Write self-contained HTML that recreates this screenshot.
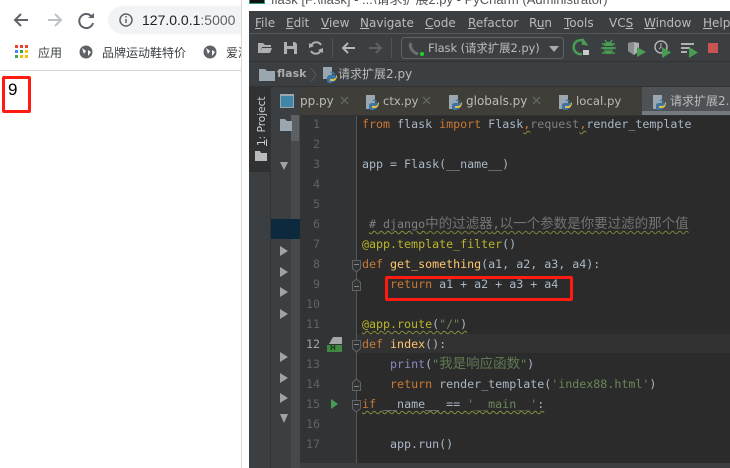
<!DOCTYPE html>
<html><head><meta charset="utf-8">
<style>
html,body{margin:0;padding:0;background:#fff}
#r{position:relative;width:730px;height:468px;overflow:hidden;background:#fff;font-family:"Liberation Sans","Noto Sans CJK SC",sans-serif}
.a{position:absolute;white-space:pre}
.b{position:absolute}
.ide{color:#bbbbbb;font-size:11.5px;font-family:"DejaVu Sans","Noto Sans CJK SC",sans-serif}
.c{position:absolute;left:362px;font:11.65px/20px "DejaVu Sans Mono","Noto Sans CJK SC",monospace;color:#a9b7c6;white-space:pre;height:20px}
.c i{font-style:normal;font-size:13.5px;line-height:14px;opacity:.85}
.n{position:absolute;left:300px;width:20px;text-align:right;font:11.65px/20px "DejaVu Sans Mono",monospace;color:#606366}
.k{color:#cc7832}.g{color:#6a8759}.y{color:#bbb529}.f{color:#ffc66d}.p{color:#808080}.b2{color:#8888c6}.w{color:#a9b7c6}
.u{text-decoration:underline wavy #8a8f3c 1px;text-underline-offset:2px}
.tri{position:absolute;left:280px;width:0;height:0;border-left:8px solid #a0a2a4;border-top:5px solid transparent;border-bottom:5px solid transparent}
.m u{text-underline-offset:1px}
</style></head><body><div id="r">

<!-- Browser -->
<svg class="b" style="left:0;top:0" width="242" height="70" viewBox="0 0 242 70" fill="none">
<path d="M28 20H16M21 14l-6 6 6 6" stroke="#5f6368" stroke-width="2"/>
<path d="M48 20h12M55 14l6 6-6 6" stroke="#bdc1c6" stroke-width="2"/>
<path d="M92 17a7 7 0 1 0 1 6" stroke="#5f6368" stroke-width="2"/>
<path d="M88 15h6v-5z" fill="#5f6368" transform="translate(0,3)"/>
<rect x="108" y="6" width="150" height="28" rx="14" fill="#f1f3f4"/>
<circle cx="126" cy="20" r="6" stroke="#5f6368" stroke-width="1.500"/>
<path d="M126 19v4M126 16v1.500" stroke="#5f6368" stroke-width="1.500"/>
<g>
<rect x="15" y="45" width="3" height="3" fill="#ea4335"/><rect x="20" y="45" width="3" height="3" fill="#ea4335"/><rect x="25" y="45" width="3" height="3" fill="#ea4335"/>
<rect x="15" y="50" width="3" height="3" fill="#4285f4"/><rect x="20" y="50" width="3" height="3" fill="#34a853"/><rect x="25" y="50" width="3" height="3" fill="#fbbc04"/>
<rect x="15" y="55" width="3" height="3" fill="#34a853"/><rect x="20" y="55" width="3" height="3" fill="#fbbc04"/><rect x="25" y="55" width="3" height="3" fill="#fbbc04"/>
</g>
<circle cx="86" cy="52" r="6.500" fill="#5f6368"/><path d="M82 48l4 3-2 3zM88 50l3 2-3 4z" fill="#fff"/>
<circle cx="210" cy="52" r="6.500" fill="#5f6368"/><path d="M206 48l4 3-2 3zM212 50l3 2-3 4z" fill="#fff"/>
</svg>
<div class="a" style="left:142px;top:11px;font-size:14px;line-height:18px;color:#202124">127.0.0.1<span style="color:#5f6368">:5000</span></div>
<div class="a" style="left:38px;top:45px;font-size:12px;line-height:16px;color:#3c4043">应用</div>
<div class="a" style="left:102px;top:45px;font-size:12px;line-height:16px;color:#3c4043">品牌运动鞋特价</div>
<div class="a" style="left:226px;top:45px;width:15px;overflow:hidden;font-size:12px;line-height:16px;color:#3c4043">爱淘</div>
<div class="b" style="left:0;top:70px;width:241px;height:1px;background:#d6d6d6"></div>
<div class="a" style="left:8px;top:80px;font-size:17px;line-height:20px;color:#000">9</div>
<div class="b" style="left:2px;top:76px;width:23px;height:31px;border:3px solid #ff1a12;border-radius:2px"></div>

<!-- window edge & title -->
<div class="b" style="left:241px;top:0;width:1px;height:468px;background:#d8d8d8"></div>
<div class="b" style="left:249px;top:0;width:16px;height:4px;background:#111;border:1px solid #2f9c6b;border-top:0;box-sizing:border-box"></div>
<div class="a" style="left:271px;top:-7px;font-size:13px;line-height:14px;color:#555;">flask [F:\flask] - ...\请求扩展2.py - PyCharm (Administrator)</div>
<div class="b" style="left:249px;top:11px;width:481px;height:457px;background:#3c3f41"></div>

<!-- menu -->
<div class="b" style="left:249px;top:33px;width:481px;height:1px;background:#55585a"></div>
<div class="a ide m" style="left:255px;top:15px;line-height:16px;font-size:12px"><u>F</u>ile</div>
<div class="a ide m" style="left:286px;top:15px;line-height:16px;font-size:12px"><u>E</u>dit</div>
<div class="a ide m" style="left:321px;top:15px;line-height:16px;font-size:12px"><u>V</u>iew</div>
<div class="a ide m" style="left:360px;top:15px;line-height:16px;font-size:12px"><u>N</u>avigate</div>
<div class="a ide m" style="left:425px;top:15px;line-height:16px;font-size:12px"><u>C</u>ode</div>
<div class="a ide m" style="left:468px;top:15px;line-height:16px;font-size:12px"><u>R</u>efactor</div>
<div class="a ide m" style="left:529px;top:15px;line-height:16px;font-size:12px">R<u>u</u>n</div>
<div class="a ide m" style="left:564px;top:15px;line-height:16px;font-size:12px"><u>T</u>ools</div>
<div class="a ide m" style="left:609px;top:15px;line-height:16px;font-size:12px">VC<u>S</u></div>
<div class="a ide m" style="left:644px;top:15px;line-height:16px;font-size:12px"><u>W</u>indow</div>
<div class="a ide m" style="left:703px;top:15px;line-height:16px;font-size:12px"><u>H</u>elp</div>

<!-- toolbar -->
<div class="b" style="left:249px;top:61px;width:481px;height:1px;background:#323232"></div>
<svg class="b" style="left:249px;top:34px" width="481" height="28" viewBox="249 34 481 28" fill="none">
<path d="M258 53V43h5l2 2h6v2h-9l-2 6z M260 53l2-5h10l-2 5z" fill="#aeb0b2"/>
<path d="M284 42h11l2 2v10h-13z" fill="#aeb0b2"/><rect x="287" y="42" width="6" height="4" fill="#3c3f41"/><rect x="287" y="49" width="7" height="5" fill="#3c3f41"/>
<path d="M321 45a5.500 5.500 0 0 0-9.500 0M311 51a5.500 5.500 0 0 0 9.500 0" stroke="#aeb0b2" stroke-width="2"/><path d="M309 43l5 3-5 2zM323 53l-5-3 5-2z" fill="#aeb0b2"/>
<path d="M332.500 38v20" stroke="#515456"/><path d="M391.500 38v20" stroke="#515456"/>
<path d="M355 48h-12M348 43l-5 5 5 5" stroke="#b4b6b8" stroke-width="2"/>
<path d="M369 48h12M376 43l5 5-5 5" stroke="#5f6264" stroke-width="2"/>
<rect x="401.500" y="37.500" width="162" height="21" rx="3" stroke="#606366"/>
<path d="M411 43c-2 4 1 9 7 11" stroke="#6d7072" stroke-width="3"/>
<circle cx="422" cy="54" r="2" fill="#19d62a"/>
<path d="M549 46h10l-5 6z" fill="#a9abad"/>
<path d="M584 41a7 7 0 1 0-2 13" stroke="#499c54" stroke-width="2.500"/><path d="M582 38v7h7z" fill="#499c54" transform="rotate(8 584 42)"/><rect x="583" y="50" width="6" height="5" fill="#c8cacc"/>
<ellipse cx="608.500" cy="48" rx="5" ry="6" fill="#499c54"/><path d="M602 44l13 0M601 48h15M602 53h13M605 40l2 3M612 40l-2 3" stroke="#499c54" stroke-width="1.500"/><path d="M604 46.500h9M604 50h9" stroke="#3c3f41"/>
<path d="M628 43l6-1 5 1v8l-5 4-6-4z" fill="#afb1b3"/><path d="M634 42v13l-6-4v-8z" fill="#8c8e90"/><path d="M637 47l9 5-9 5z" fill="#499c54"/>
<circle cx="661" cy="47" r="6" stroke="#afb1b3" stroke-width="1.500"/><path d="M661 43v4l-2 2" stroke="#afb1b3"/><path d="M662 47l9 5.500-9 5.500z" fill="#499c54"/>
<path d="M681 44h13M681 48h9M681 52h6" stroke="#afb1b3" stroke-width="2"/><path d="M689 47l9 5.500-9 5.500z" fill="#499c54"/>
<rect x="708" y="43" width="10" height="10" fill="#c75450"/>
</svg>
<div class="a ide" style="left:428px;top:40px;line-height:16px;font-size:11.5px;letter-spacing:-.1px">Flask (请求扩展2.py)</div>

<!-- nav bar -->
<svg class="b" style="left:258px;top:66px" width="60" height="18" fill="none">
<path d="M1 3h6l2 2h8v10H1z" fill="#9aa7b0"/>
<path d="M53 2l5 7-5 7" stroke="#55585a"/>
</svg>
<div class="a ide" style="left:277px;top:66px;line-height:16px;font-weight:bold;font-size:11px;color:#a9abad">flask</div>
<svg class="b" style="left:322px;top:66px" width="16" height="18"><rect x="1" y="1" width="9" height="12" fill="#9aa7b0"/><path d="M8 6c3-1 5 0 5 3H8c-3 0-3 3-3 4v2c0 2 4 3 6 1 2 0 3-2 3-4v-2z" fill="#3a75a6"/><path d="M8 15h3c2 0 4-2 4-5l-1-1v2c0 1-2 2-3 2H8z" fill="#e8bf3c"/></svg>
<div class="a ide" style="left:338px;top:66px;line-height:16px;font-size:12px">请求扩展2.py</div>

<!-- tabs -->
<div class="b" style="left:249px;top:86px;width:481px;height:1px;background:#323232"></div>
<div class="b" style="left:300px;top:87px;width:342px;height:28px;background:#3f3e38"></div>
<div class="b" style="left:271px;top:87px;width:29px;height:28px;background:#3c3f41"></div>
<div class="b" style="left:642px;top:87px;width:88px;height:28px;background:#4e5254"></div>
<div class="b" style="left:280px;top:94px;width:12px;height:11px;border:1px solid #9aa7b0;border-top-width:2px;background:#3f86a8"></div>
<div class="a ide" style="left:300px;top:93px;line-height:16px;font-size:12px">pp.py</div>
<div class="a ide" style="left:383px;top:93px;line-height:16px;font-size:11.500px">ctx.py</div>
<div class="a ide" style="left:466px;top:93px;line-height:16px;font-size:12px">globals.py</div>
<div class="a ide" style="left:576px;top:93px;line-height:16px;font-size:11.700px">local.py</div>
<div class="a ide" style="left:670px;top:93px;line-height:16px;font-size:12px">请求扩展2.py</div>
<svg class="b" style="left:340px;top:87px" width="390" height="28" fill="none">
<g stroke="#6c6e70"><path d="M1 10l7 7M8 10l-7 7"/><path d="M83 10l7 7M90 10l-7 7"/><path d="M193 10l7 7M200 10l-7 7"/></g>
<g id="py" transform="translate(-1,0)"><rect x="27" y="8" width="9" height="14" fill="#9aa7b0"/><path d="M33 13c3-1 5 0 5 3h-5c-3 0-3 2-3 3v2c0 2 4 3 6 1 2 0 3-2 3-4v-2z" fill="#3a75a6"/><path d="M33 21h3c2 0 4-2 4-5l-1-1v2c0 1-2 2-3 2h-3z" fill="#e8bf3c"/></g>
<use href="#py" x="83"/><use href="#py" x="193"/><use href="#py" x="287"/>
</svg>

<!-- left strip -->
<div class="b" style="left:249px;top:87px;width:21px;height:85px;background:#2f3133"></div>
<div class="b" style="left:270px;top:87px;width:1px;height:381px;background:#323232"></div>
<div class="a ide" style="left:254px;top:146px;line-height:16px;font-size:10.500px;transform-origin:0 0;transform:rotate(-90deg);color:#d0d0d0"><u>1</u>: Project</div>
<svg class="b" style="left:255px;top:150px" width="12" height="11"><path d="M0 1h5l1 2h6v8H0z" fill="#b8babc"/></svg>

<!-- project panel -->
<div class="b" style="left:271px;top:115px;width:29px;height:353px;background:#3c3f41"></div>
<div class="b" style="left:291px;top:115px;width:9px;height:353px;background:#46494b"></div>
<div class="b" style="left:291px;top:115px;width:8px;height:26px;background:#5e6163"></div>
<div class="b" style="left:271px;top:219px;width:29px;height:20px;background:#0d293e"></div>
<svg class="b" style="left:280px;top:119px" width="14" height="12"><path d="M0 0h5l2 2h5v10H0z" fill="#9aa7b0"/></svg>
<div class="tri" style="border:0;border-top:8px solid #a0a2a4;border-left:4.500px solid transparent;border-right:4.500px solid transparent;top:162px"></div>
<div class="tri" style="top:246px"></div>
<div class="tri" style="top:267px"></div>
<div class="tri" style="top:287px"></div>
<div class="tri" style="top:309px"></div>
<div class="tri" style="top:352px"></div>
<div class="tri" style="top:373px"></div>
<div class="tri" style="top:393px"></div>
<div class="tri" style="border:0;border-top:9px solid #a0a2a4;border-left:4.500px solid transparent;border-right:4.500px solid transparent;top:414px"></div>

<!-- gutter + editor -->
<div class="b" style="left:300px;top:115px;width:56px;height:348px;background:#313335"></div>
<div class="b" style="left:356px;top:115px;width:1px;height:348px;background:#555"></div>
<div class="b" style="left:357px;top:115px;width:373px;height:348px;background:#2b2b2b"></div>
<div class="b" style="left:357px;top:334px;width:373px;height:19px;background:#323232"></div>
<div class="b" style="left:300px;top:463px;width:430px;height:5px;background:#3c3f41"></div>
<div class="b" style="left:300px;top:115px;width:430px;height:1px;background:#323232"></div>
<div class="b" style="left:642px;top:111px;width:88px;height:4px;background:#747a80"></div>

<div class="n" style="top:114px">1</div><div class="n" style="top:134px">2</div><div class="n" style="top:154px">3</div><div class="n" style="top:174px">4</div><div class="n" style="top:194px">5</div><div class="n" style="top:214px">6</div><div class="n" style="top:234px">7</div><div class="n" style="top:254px">8</div><div class="n" style="top:274px">9</div><div class="n" style="top:294px">10</div><div class="n" style="top:314px">11</div><div class="n" style="top:334px;color:#a4a3a3">12</div><div class="n" style="top:354px">13</div><div class="n" style="top:374px">14</div><div class="n" style="top:394px">15</div><div class="n" style="top:414px">16</div><div class="n" style="top:434px">17</div>

<svg class="b" style="left:327px;top:260px" width="36" height="160" fill="none">
<g stroke="#606366" fill="#313335">
<path d="M25.500 .5h8v8l-4 3.500-4-3.500z"/>
<path d="M29.500 19l4 3.500v8h-8v-8z"/>
<path d="M25.500 80.500h8v8l-4 3.500-4-3.500z"/>
<path d="M29.500 119l4 3.500v8h-8v-8z"/>
<path d="M25.500 140.500h8v8l-4 3.500-4-3.500z"/>
</g>
<path d="M27 4.500h5M27 26.500h5M27 84.500h5M27 126.500h5M27 144.500h5" stroke="#808284"/>
<path d="M6 77h9v7H2z" fill="#a4a6a8"/><rect y="85" width="15" height="7" fill="#3f8a3f"/>
<path d="M4 139l7 5-7 5z" fill="#499c54"/>
</svg>
<div class="a" style="left:330px;top:345px;font:bold 7px/7px 'DejaVu Sans',sans-serif;color:#1f3a1f">H</div>

<div class="c" style="top:114px"><span class="k">from</span> flask <span class="k">import</span> Flask<span class="k u">,</span><span class="p">request</span><span class="k u">,</span>render_template</div>
<div class="c" style="top:154px">app = Flask(__name__)</div>
<div class="c" style="top:214px"> <span class="p u"># django<i>中的过滤器</i>,<i>以一个参数是你要过滤的那个值</i></span></div>
<div class="c" style="top:234px"><span class="y">@app.template_filter</span>()</div>
<div class="c" style="top:254px"><span class="k">def</span> <span class="f">get_something</span>(a1, a2, a3, a4):</div>
<div class="c" style="top:274px">    <span class="k">return</span> a1 + a2 + a3 + a4</div>
<div class="c" style="top:314px"><span class="u"><span class="y">@app.route</span>(<span class="g">"/"</span>)</span></div>
<div class="c" style="top:334px"><span class="k">def</span> <span class="f">index</span>():</div>
<div class="c" style="top:354px">    <span class="b2">print</span>(<span class="g">"<i>我是响应函数</i>"</span>)</div>
<div class="c" style="top:374px">    <span class="k">return</span> render_template(<span class="g">'index88.html'</span>)</div>
<div class="c" style="top:394px"><span class="u"><span class="k">if</span> __name__ == <span class="g">'__main__'</span>:</span></div>
<div class="c" style="top:434px">    app.run()</div>

<div class="b" style="left:385px;top:276px;width:182px;height:19px;border:3px solid #ff1a12;border-radius:2px"></div>
</div></body></html>
